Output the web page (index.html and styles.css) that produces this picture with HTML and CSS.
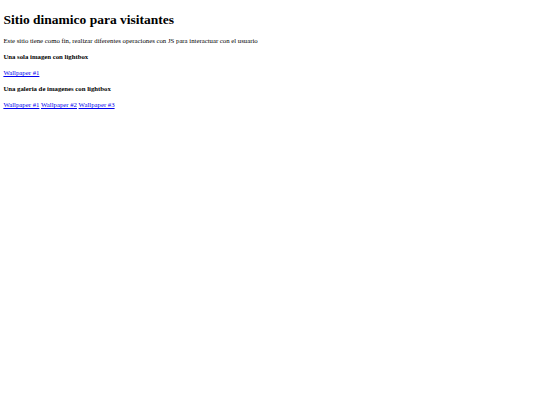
FILE: index.html
```html
<!DOCTYPE html>
<html lang="es">
<head>
<meta charset="utf-8">
<title>Sitio dinamico para visitantes</title>
<link rel="stylesheet" href="styles.css">
</head>
<body>
<h1 class="title">Sitio dinamico para visitantes</h1>
<p class="intro">Este sitio tiene como fin, realizar diferentes operaciones con JS para interactuar con el usuario</p>
<h4 class="section">Una sola imagen con lightbox</h4>
<p class="links"><a href="#">Wallpaper #1</a></p>
<h4 class="section">Una galeria de imagenes con lightbox</h4>
<p class="links"><a href="#">Wallpaper #1</a> <a href="#">Wallpaper #2</a> <a href="#">Wallpaper #3</a></p>
</body>
</html>
```
FILE: styles.css
```css
html { background: #fff; }
body {
  margin: 3.375px;
  font-family: "Liberation Serif", "Times New Roman", serif;
  font-size: 6.75px;
  color: #000;
}
.title { font-size: 13.5px; margin: 0.67em 0; }
.intro, .links { margin: 1em 0; }
.section { font-size: 6.75px; margin: 1.33em 0; }
a { color: #0000ee; }
```
